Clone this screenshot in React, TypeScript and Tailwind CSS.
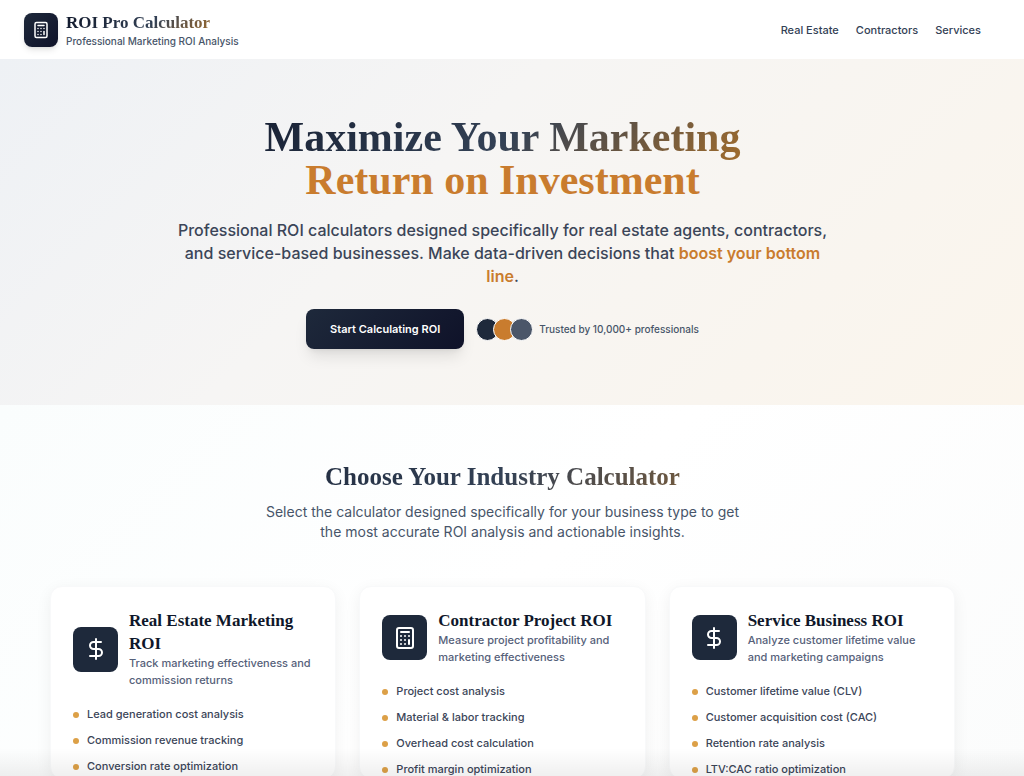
import { Calculator, DollarSign, type LucideIcon } from "lucide-react";

type Industry = {
  title: string;
  description: string;
  icon: LucideIcon;
  features: string[];
};

const navLinks = [
  { label: "Real Estate", href: "#real-estate" },
  { label: "Contractors", href: "#contractors" },
  { label: "Services", href: "#services" },
];

const industries: Industry[] = [
  {
    title: "Real Estate Marketing ROI",
    description: "Track marketing effectiveness and commission returns",
    icon: DollarSign,
    features: [
      "Lead generation cost analysis",
      "Commission revenue tracking",
      "Conversion rate optimization",
    ],
  },
  {
    title: "Contractor Project ROI",
    description: "Measure project profitability and marketing effectiveness",
    icon: Calculator,
    features: [
      "Project cost analysis",
      "Material & labor tracking",
      "Overhead cost calculation",
      "Profit margin optimization",
    ],
  },
  {
    title: "Service Business ROI",
    description: "Analyze customer lifetime value and marketing campaigns",
    icon: DollarSign,
    features: [
      "Customer lifetime value (CLV)",
      "Customer acquisition cost (CAC)",
      "Retention rate analysis",
      "LTV:CAC ratio optimization",
    ],
  },
];

function Header() {
  return (
    <header className="flex h-[59px] shrink-0 items-center justify-between bg-white pr-[43px] pl-6">
      <div className="flex items-center gap-2">
        <div className="flex size-[34px] items-center justify-center rounded-lg bg-linear-135 from-[#1e293b] to-[#0f1229] shadow-md">
          <Calculator className="size-[18px] text-white" strokeWidth={2} />
        </div>
        <div className="pt-[2px]">
          <p className="bg-linear-135/srgb from-[#0f172a] via-[#334155] to-[#c97c1e] bg-clip-text font-['Liberation_Serif',serif] text-[17px] leading-5 font-bold text-transparent">
            ROI Pro Calculator
          </p>
          <p className="text-[10px] leading-4 font-medium text-[#475569]">
            Professional Marketing ROI Analysis
          </p>
        </div>
      </div>
      <nav className="flex gap-[17px] text-[11px] leading-4 font-medium text-[#334155]">
        {navLinks.map((link) => (
          <a key={link.href} href={link.href}>
            {link.label}
          </a>
        ))}
      </nav>
    </header>
  );
}

function Hero() {
  return (
    <section className="shrink-0 bg-linear-135/srgb from-[#eef1f5] from-0% via-[#f6f5f4] via-40% to-[#fbf5ec] pt-[57px] pr-[43px] pb-14 pl-6 text-center">
      <div className="mx-auto max-w-[660px]">
        <h1 className="font-['Liberation_Serif',serif] text-[42px] leading-[43px] font-bold">
          <span className="-mb-2 block bg-linear-135/srgb from-[#0f172a] via-[#334155] to-[#c97c1e] bg-clip-text pb-2 text-transparent">
            Maximize Your Marketing
          </span>
          <span className="block text-[#c97c2e]">Return on Investment</span>
        </h1>
        <p className="mt-[17px] text-[16px] leading-[23px] font-medium text-[#3b4558]">
          Professional ROI calculators designed specifically for real estate agents, contractors,
          and service-based businesses. Make data-driven decisions that{" "}
          <span className="font-semibold text-[#c97c2e]">boost your bottom line</span>.
        </p>
        <div className="mt-[21px] flex items-center justify-center gap-3">
          <button
            type="button"
            className="h-10 rounded-lg bg-linear-135 from-[#1e293b] to-[#0f1229] px-6 text-[11px] font-semibold text-white shadow-lg"
          >
            Start Calculating ROI
          </button>
          <div className="flex items-center gap-[6px]">
            <div className="flex -space-x-[6px]">
              <span className="size-[23px] rounded-full border border-white bg-[#1e293b]" />
              <span className="size-[23px] rounded-full border border-white bg-[#c97c2e]" />
              <span className="size-[23px] rounded-full border border-white bg-[#4b5669]" />
            </div>
            <span className="text-[10px] leading-4 font-medium text-[#475569]">
              Trusted by 10,000+ professionals
            </span>
          </div>
        </div>
      </div>
    </section>
  );
}

function IndustryCard({ title, description, icon: Icon, features }: Industry) {
  return (
    <article className="rounded-xl border border-[#f8f9fa] bg-white px-[22px] pt-[22px] shadow-[0_4px_16px_rgba(15,23,42,0.06)]">
      <div className="flex items-center gap-[11px]">
        <div className="flex size-[45px] shrink-0 items-center justify-center rounded-lg bg-[#1e293b]">
          <Icon className="size-6 text-white" strokeWidth={2} />
        </div>
        <div>
          <h3 className="font-['Liberation_Serif',serif] text-[17px] leading-[23px] font-bold text-[#0f172a]">
            {title}
          </h3>
          <p className="text-[11px] leading-[17px] font-medium text-[#56617a]">{description}</p>
        </div>
      </div>
      <ul className="mt-[17px] flex flex-col gap-[9px] text-[11px] leading-[17px] font-medium text-[#3b4558]">
        {features.map((feature) => (
          <li key={feature} className="flex items-center gap-2">
            <span className="size-[6px] rounded-full bg-[#dca047]" />
            {feature}
          </li>
        ))}
      </ul>
    </article>
  );
}

function Calculators() {
  return (
    <section className="flex flex-1 flex-col bg-linear-135 from-[#fafdfd] via-white to-[#fbfcfc] pt-14 pr-[69px] pl-[50px]">
      <h2 className="bg-linear-135/srgb from-[#0f172a] via-[#334155] to-[#c97c1e] bg-clip-text text-center font-['Liberation_Serif',serif] text-[25px] leading-8 font-bold text-transparent">
        Choose Your Industry Calculator
      </h2>
      <p className="mx-auto mt-[9px] max-w-[476px] text-center text-[14px] leading-5 text-[#475569]">
        Select the calculator designed specifically for your business type to get the most accurate
        ROI analysis and actionable insights.
      </p>
      <div className="mt-11 grid flex-1 grid-cols-3 gap-[23px]">
        {industries.map((industry) => (
          <IndustryCard key={industry.title} {...industry} />
        ))}
      </div>
    </section>
  );
}

export default function App() {
  return (
    <div className="relative flex h-screen flex-col overflow-hidden bg-white font-['Inter',sans-serif]">
      <Header />
      <main className="flex flex-1 flex-col">
        <Hero />
        <Calculators />
      </main>
      <div className="pointer-events-none absolute inset-x-0 bottom-0 h-7 bg-linear-to-t from-black/6 to-transparent" />
    </div>
  );
}
